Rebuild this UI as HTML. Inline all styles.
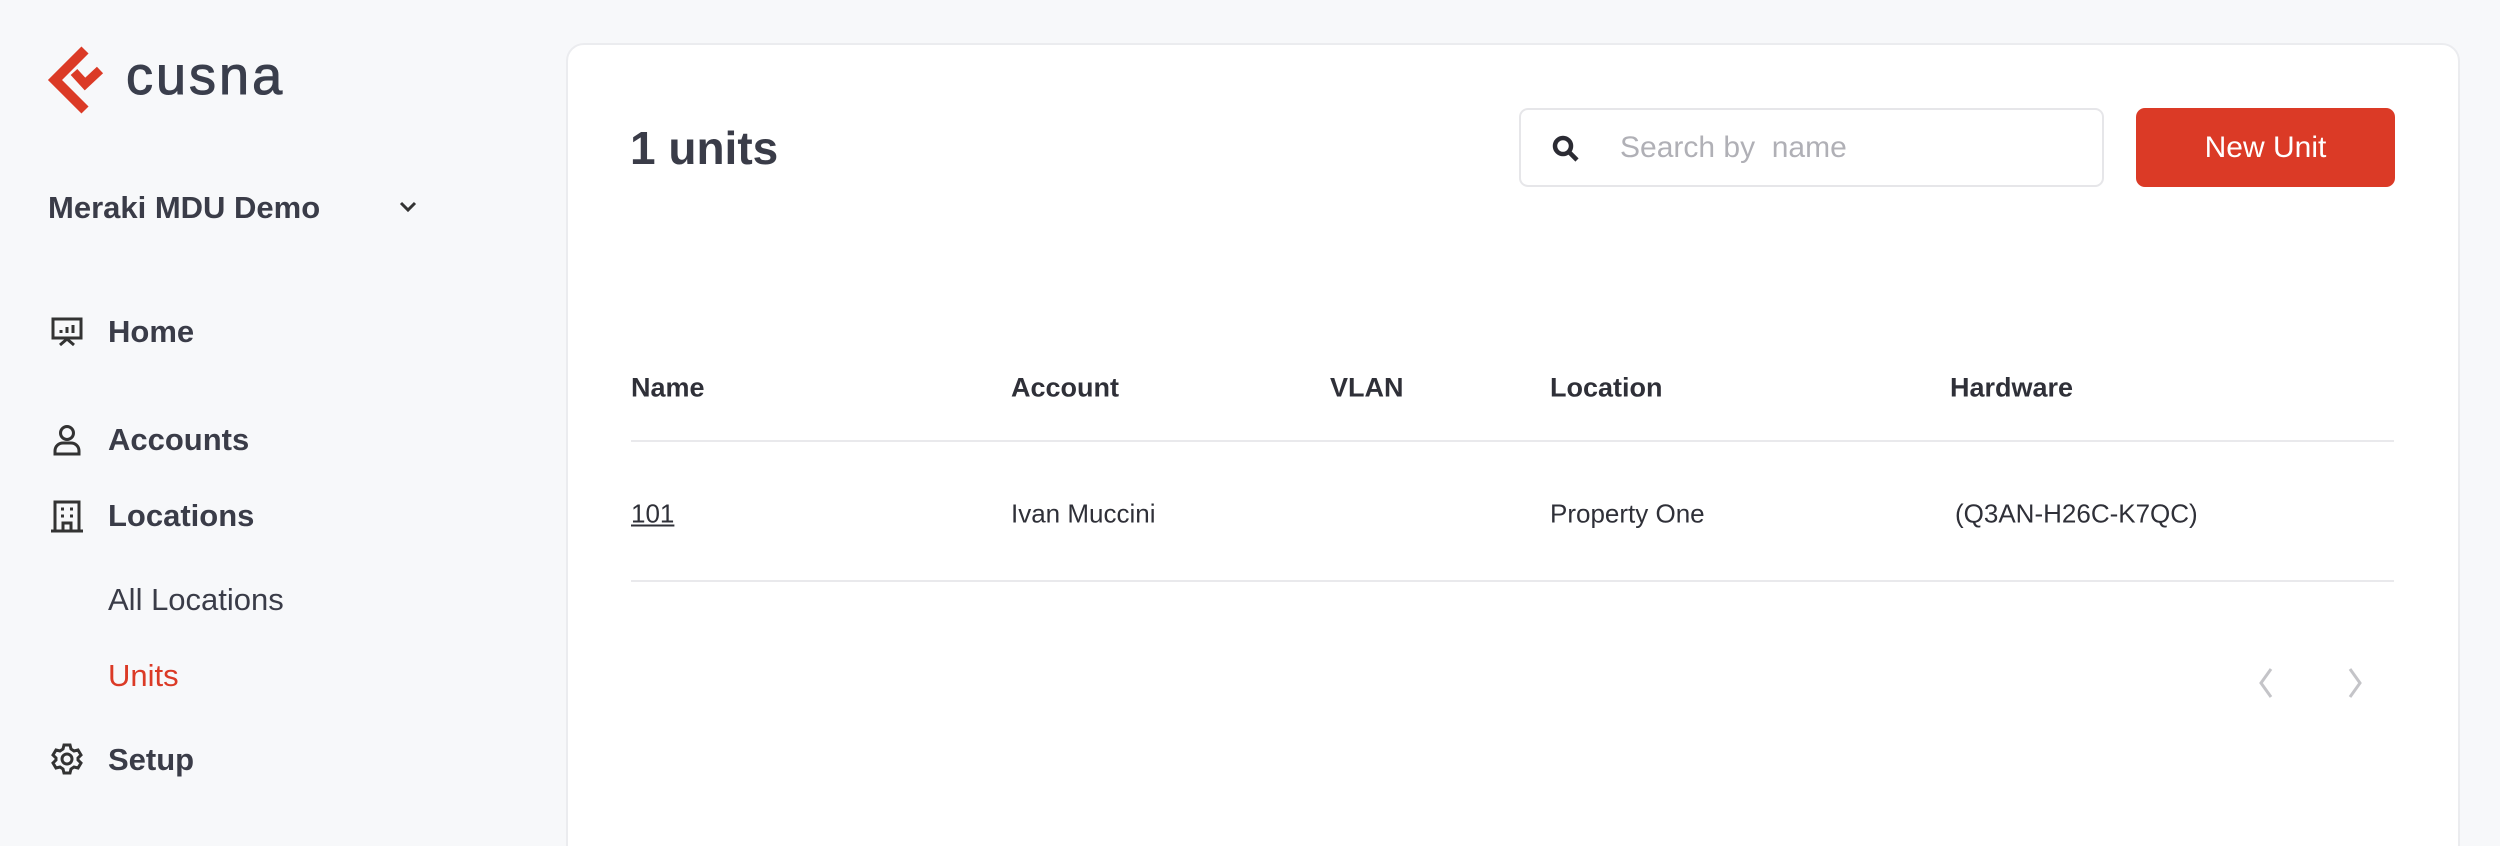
<!DOCTYPE html>
<html style="height:846px;overflow:hidden"><head><meta charset="utf-8"><style>
*{margin:0;padding:0;box-sizing:border-box}
body{width:2500px;height:846px;background:#f7f8fa;font-family:"Liberation Sans",sans-serif;color:#3a3c48;position:relative;overflow:hidden}
.a{position:absolute;white-space:nowrap}
.nav{font-size:31px;font-weight:700;transform:translateY(-50%)}
.card{position:absolute;left:566px;top:43px;width:1894px;height:840px;background:#fff;border:2px solid #ebecef;border-radius:18px}
.th{font-size:27px;font-weight:700;transform:translateY(-50%);color:#2f3038}
.td{font-size:26px;transform:translateY(-50%);color:#2f3038}
.line{position:absolute;left:631px;width:1763px;height:2px;background:#e9e9ec}
</style></head><body>
<svg class="a" style="left:40px;top:40px" width="80" height="80" viewBox="40 40 80 80">
<path d="M85 50 L55 80 L85 110" fill="none" stroke="#db3a26" stroke-width="10"/>
<path d="M74 72 L85 84 L100 70" fill="none" stroke="#db3a26" stroke-width="9"/>
</svg>
<div class="a" style="left:126px;top:46px;font-size:54px;font-weight:400;letter-spacing:3px;line-height:60px;color:#3a3e4c;-webkit-text-stroke:1px #3a3e4c">cusna</div>
<div class="a nav" style="left:48px;top:208px;font-weight:700;font-size:31px">Meraki MDU Demo</div>
<svg class="a" style="left:398px;top:200px" width="20" height="14" viewBox="0 0 20 14"><path d="M3 3 L10 10 L17 3" fill="none" stroke="#333" stroke-width="3"/></svg>
<svg class="a" style="left:51px;top:316px" width="32" height="32" viewBox="0 0 32 32" fill="none" stroke="#333" stroke-width="3"><rect x="2" y="3" width="28" height="19"/><path d="M10 17v-3M16 17v-6M22 17v-8M9 29l7-6 7 6"/></svg>
<div class="a nav" style="left:108px;top:332px">Home</div>
<svg class="a" style="left:52px;top:424px" width="30" height="32" viewBox="0 0 30 32" fill="none" stroke="#333" stroke-width="3"><circle cx="15" cy="9" r="6.5"/><path d="M3 30v-3c0-5 4-8 8-8h8c4 0 8 3 8 8v3z"/></svg>
<div class="a nav" style="left:108px;top:440px">Accounts</div>
<svg class="a" style="left:50px;top:499px" width="34" height="34" viewBox="0 0 34 34" fill="none" stroke="#333" stroke-width="3"><path d="M5 32V3h24v29M1 32h32M13 32v-8h8v8"/><path d="M11 10h3M20 10h3M11 17h3M20 17h3" stroke-width="3"/></svg>
<div class="a nav" style="left:108px;top:516px">Locations</div>
<div class="a nav" style="left:108px;top:600px;font-weight:400;font-size:31px">All Locations</div>
<div class="a nav" style="left:108px;top:676px;font-weight:400;font-size:31px;color:#db3a26">Units</div>
<svg class="a" style="left:50px;top:742px" width="34" height="34" viewBox="0 0 34 34" fill="none" stroke="#333" stroke-width="3"><circle cx="17" cy="17" r="5"/><path d="M14 3h6l1 4 3 2 4-1 3 5-3 3v2l3 3-3 5-4-1-3 2-1 4h-6l-1-4-3-2-4 1-3-5 3-3v-2l-3-3 3-5 4 1 3-2z"/></svg>
<div class="a nav" style="left:108px;top:760px">Setup</div>

<div class="card"></div>
<div class="a" style="left:630px;top:148px;transform:translateY(-50%);font-size:46px;font-weight:700;color:#3a3c48">1 units</div>
<div class="a" style="left:1519px;top:108px;width:585px;height:79px;border:2px solid #e6e6e9;border-radius:9px;background:#fff"></div>
<svg class="a" style="left:1551px;top:134px" width="30" height="30" viewBox="0 0 30 30" fill="none" stroke="#2b2b33" stroke-width="4.5"><circle cx="12" cy="12" r="8"/><path d="M18 18l8 8"/></svg>
<div class="a" style="left:1620px;top:148px;transform:translateY(-50%);font-size:30px;color:#b0b0b6">Search by&nbsp; name</div>
<div class="a" style="left:2136px;top:108px;width:259px;height:79px;background:#db3a26;border-radius:9px;color:#fff;font-size:30px;line-height:79px;text-align:center">New Unit</div>
<div class="a th" style="left:631px;top:388px">Name</div>
<div class="a th" style="left:1011px;top:388px">Account</div>
<div class="a th" style="left:1330px;top:388px">VLAN</div>
<div class="a th" style="left:1550px;top:388px">Location</div>
<div class="a th" style="left:1950px;top:388px">Hardware</div>
<div class="line" style="top:440px"></div>
<div class="a td" style="left:631px;top:514px;text-decoration:underline">101</div>
<div class="a td" style="left:1011px;top:514px">Ivan Muccini</div>
<div class="a td" style="left:1550px;top:514px">Property One</div>
<div class="a td" style="left:1955px;top:514px">(Q3AN-H26C-K7QC)</div>
<div class="line" style="top:580px"></div>
<svg class="a" style="left:2256px;top:666px" width="20" height="34" viewBox="0 0 20 34"><path d="M15 3L5 17l10 14" fill="none" stroke="#c4c4c8" stroke-width="3"/></svg>
<svg class="a" style="left:2345px;top:666px" width="20" height="34" viewBox="0 0 20 34"><path d="M5 3l10 14-10 14" fill="none" stroke="#c4c4c8" stroke-width="3"/></svg>
</body></html>
